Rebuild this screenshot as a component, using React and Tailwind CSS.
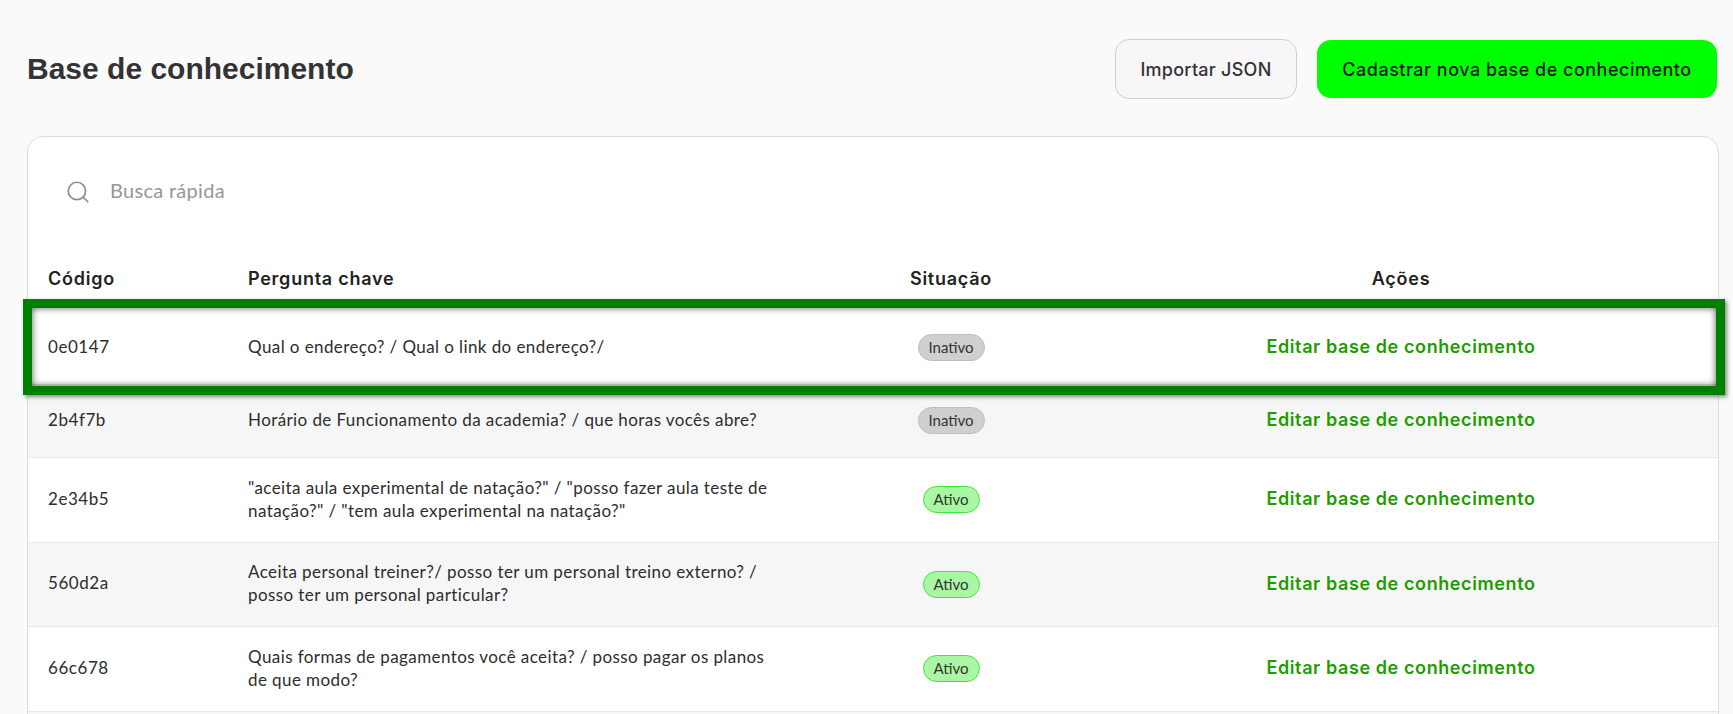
import React from "react";
import { Search } from "lucide-react";

const rows = [
  { code: "0e0147", lines: ["Qual o endereço? / Qual o link do endereço?/"], active: false, h: "h-[73px]" },
  { code: "2b4f7b", lines: ["Horário de Funcionamento da academia? / que horas vocês abre?"], active: false, alt: true, h: "h-[73px]" },
  { code: "2e34b5", lines: ['"aceita aula experimental de natação?" / "posso fazer aula teste de', 'natação?" / "tem aula experimental na natação?"'], active: true, h: "h-[85px]" },
  { code: "560d2a", lines: ["Aceita personal treiner?/ posso ter um personal treino externo? /", "posso ter um personal particular?"], active: true, alt: true, h: "h-[84px]" },
  { code: "66c678", lines: ["Quais formas de pagamentos você aceita? / posso pagar os planos", "de que modo?"], active: true, h: "h-[85px]" },
];

const poppins = "font-['Inter','Liberation_Sans',sans-serif]";
const body = "font-['Lato','Liberation_Sans',sans-serif]";

function Row({ r }) {
  return (
    <div className={`grid grid-cols-[200px_590px_266px_1fr] items-center border-b border-[#e8e8e8] pb-px ${r.h} ${r.alt ? "bg-[#f6f6f6]" : "bg-white"}`}>
      <div className={`pb-[2px] pl-5 text-[17px] tracking-[0.55px] text-[#2d2d2d] ${body}`}>{r.code}</div>
      <div className={`pb-[2px] pl-5 text-[17px] leading-[23px] tracking-[0.41px] text-[#2d2d2d] whitespace-nowrap ${body}`}>
        {r.lines.map((l) => (
          <div key={l}>{l}</div>
        ))}
      </div>
      <div className="flex justify-center">
        {r.active ? (
          <span className={`flex h-[27px] w-[57px] items-center justify-center rounded-full border border-[#3fe83f] bg-[#a9f7a2] text-[15px] text-[#333] ${body}`}>Ativo</span>
        ) : (
          <span className={`flex h-[27px] w-[67px] items-center justify-center rounded-full border border-[#bdbdbd] bg-[#cfcfcf] text-[15px] text-[#333] ${body}`}>Inativo</span>
        )}
      </div>
      <div className={`pb-[2px] text-center text-[18px] font-semibold tracking-[0.6px] text-[#1f9c00] ${poppins}`}>Editar base de conhecimento</div>
    </div>
  );
}

export default function App() {
  return (
    <div className="relative h-[714px] overflow-hidden bg-[#fafafa]">
      <header className="flex h-[136px] items-start justify-between pl-[27px] pr-4 pt-[39px]">
        <h1 className="mt-[10px] font-['Liberation_Sans',Arial,sans-serif] text-[30px] font-bold leading-[40px] text-[#333]">Base de conhecimento</h1>
        <div className="flex items-center gap-5">
          <button className={`h-[60px] w-[182px] rounded-[14px] border border-[#cfcfcf] bg-[#f8f6f8] text-[18px] font-medium tracking-[0.26px] text-[#333] ${poppins}`}>Importar JSON</button>
          <button className={`h-[58px] w-[400px] rounded-[14px] bg-[#00ff00] text-[18px] font-medium tracking-[0.5px] text-[#1a1a1a] ${poppins}`}>Cadastrar nova base de conhecimento</button>
        </div>
      </header>
      <main className="ml-[27px] mr-[14px] rounded-t-[16px] border border-[#dcdcdc] bg-white">
        <div className="flex h-[110px] items-center pl-[37px]">
          <Search className="h-[26px] w-[26px] text-[#8f8f8f]" strokeWidth={1.6} />
          <span className={`ml-[19px] pb-[4px] text-[20px] tracking-[0.3px] text-[#9a9498] ${body}`}>Busca rápida</span>
        </div>
        <div className={`grid h-[65px] grid-cols-[200px_590px_266px_1fr] items-center pb-[3px] text-[18px] font-semibold tracking-[0.75px] text-[#222] ${poppins}`}>
          <div className="pl-5">Código</div>
          <div className="pl-5">Pergunta chave</div>
          <div className="text-center">Situação</div>
          <div className="text-center">Ações</div>
        </div>
        {rows.map((r) => (
          <Row key={r.code} r={r} />
        ))}
        <div className="h-10 bg-[#f6f6f6]" />
      </main>
      <div className="pointer-events-none absolute left-[23px] top-[299px] h-[96px] w-[1702px] border-[9px] border-[#008000] shadow-[2px_2px_4px_rgba(0,0,0,0.45),inset_0_0_7px_rgba(0,0,0,0.65)]" />
    </div>
  );
}
